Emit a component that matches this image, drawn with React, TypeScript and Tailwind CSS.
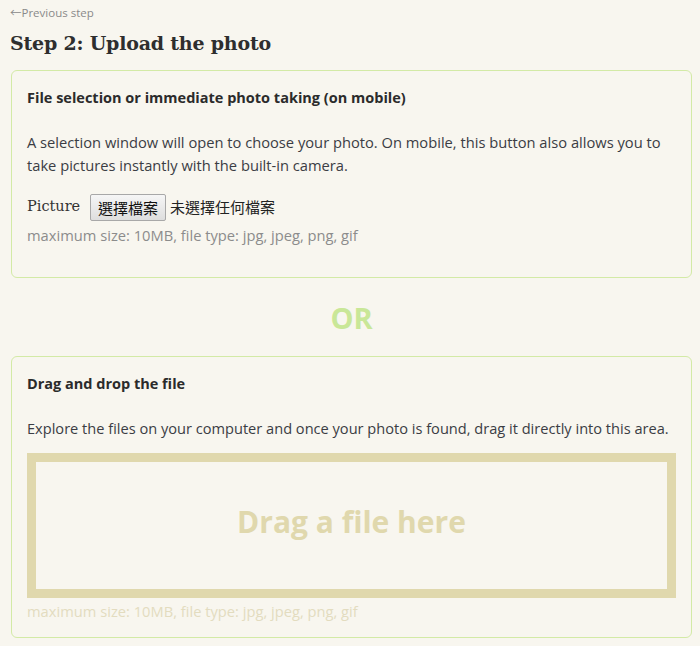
export default function App() {
    const sans = "font-['Open_Sans','Noto_Sans_CJK_TC',sans-serif]";
    return (
        <div className={`min-h-[646px] bg-[#f8f6ef] pl-[11px] pr-[8px] pt-[5px] pb-[8px] text-[#333] ${sans}`}>
            {/* Back link */}
            <a className="block -ml-px h-[16px] text-[11.5px] leading-[16px] text-[#8a8a8a]">←Previous step</a>
            <h1 className="mt-[10px] -ml-px h-[26px] font-['DejaVu_Serif',serif] text-[19px] leading-[24px] font-bold tracking-[-0.2px] text-[#2e2e2e]">
                Step 2: Upload the photo
            </h1>

            {/* Card 1: file picker */}
            <section className="mt-[13px] h-[208px] rounded-[6px] border border-[#d3eaa6] px-[15px] pt-[17px]">
                <h2 className="text-[14.5px] leading-[20px] font-bold text-[#2b2b2b]">File selection or immediate photo taking (on mobile)</h2>
                <p className="mt-[23px] text-[14.7px] leading-[23px] text-[#3b3d44]">
                    A selection window will open to choose your photo. On mobile, this button also allows you to take pictures instantly with the built-in camera.
                </p>
                <div className="mt-[16px] flex h-[28px] items-center">
                    <span className="w-[63px] font-['DejaVu_Serif',serif] text-[14.5px] text-[#333]">Picture</span>
                    <button className="h-[27px] rounded-[2px] border border-[#a8a8a8] bg-gradient-to-b from-[#f6f6f6] to-[#dedede] px-[7px] font-['Noto_Sans_CJK_TC',sans-serif] text-[15px] leading-[25px] text-[#111]">
                        選擇檔案
                    </button>
                    <span className="ml-[4px] font-['Noto_Sans_CJK_TC',sans-serif] text-[15px] text-[#222]">未選擇任何檔案</span>
                </div>
                <p className="mt-[4px] text-[14.7px] leading-[20px] text-[#8c8c8c]">maximum size: 10MB, file type: jpg, jpeg, png, gif</p>
            </section>

            <div className="mt-[21px] text-center text-[29px] leading-[38px] font-bold text-[#c9e798]">OR</div>

            {/* Card 2: drag and drop */}
            <section className="mt-[19px] h-[282px] rounded-[6px] border border-[#d3eaa6] px-[15px] pt-[17px]">
                <h2 className="text-[14.5px] leading-[20px] font-bold text-[#2b2b2b]">Drag and drop the file</h2>
                <p className="mt-[23px] text-[14.6px] leading-[23px] text-[#3b3d44]">
                    Explore the files on your computer and once your photo is found, drag it directly into this area.
                </p>
                <div className="mt-[13px] flex h-[145px] items-center justify-center border-[9px] border-[#e0d8ad] pb-[8px]">
                    <span className="text-[30px] font-bold text-[#e0d8ad]">Drag a file here</span>
                </div>
                <p className="mt-[3px] text-[14.7px] leading-[20px] text-[#e3dcbf]">maximum size: 10MB, file type: jpg, jpeg, png, gif</p>
            </section>
        </div>
    );
}
